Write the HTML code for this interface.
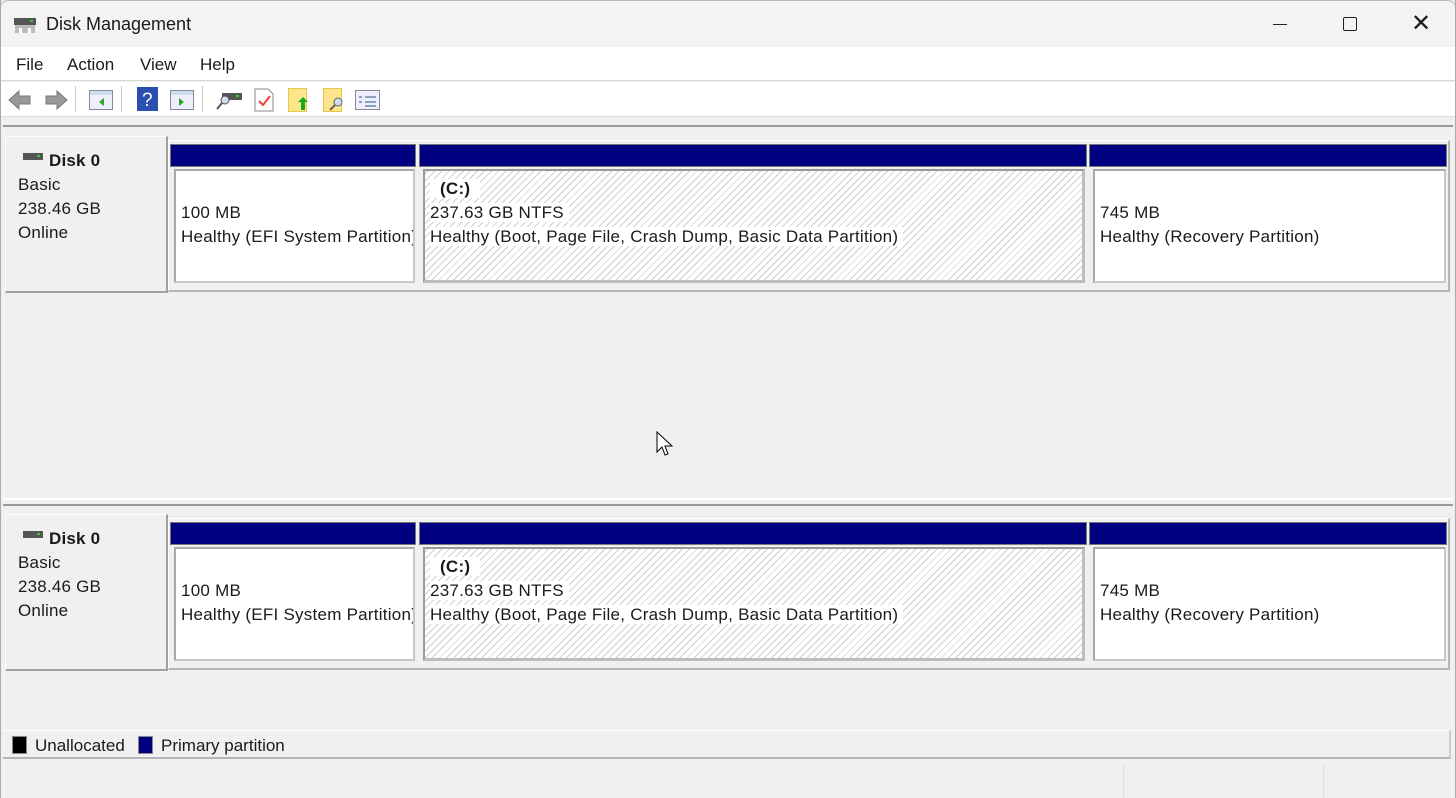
<!DOCTYPE html>
<html><head><style>
*{margin:0;padding:0;box-sizing:border-box}
body{width:1456px;height:798px;background:#f0f0f0;font-family:"Liberation Sans",sans-serif;color:#1a1a1a;position:relative;overflow:hidden;font-size:16px}
.a{position:absolute}
.title{left:0;top:0;width:1456px;height:47px;background:#f3f3f3;border:1px solid #bbb;border-bottom:none;border-radius:8px 8px 0 0}
.menu{left:0;top:47px;width:1456px;height:34px;background:#fff;border-bottom:1px solid #d6d6d6}
.menu span{position:absolute;top:8px;font-size:17px}
.tb{left:0;top:82px;width:1456px;height:35px;background:#fff;border-bottom:1px solid #ddd}
.sep{position:absolute;top:4px;width:1px;height:26px;background:#ccc}
.pane{left:3px;width:1450px;background:#f0f0f0;border-top:2px solid #9a9a9a}
.lbl{background:#f0f0f0;border:1px solid #fff;border-right:2px solid #a0a0a0;border-bottom:2px solid #a0a0a0;font-size:17px;line-height:24px;padding:12px 0 0 12px;letter-spacing:0.2px}
.blue{background:#000080;border:1px solid #777;}
.box{background:#fff;border:2px solid #c8c8c8;border-top:2px solid #a8a8a8;border-left:2px solid #a8a8a8;font-size:17px;line-height:24px;padding:30px 0 0 5px;white-space:nowrap;overflow:hidden;letter-spacing:0.25px}
.hatch{background:repeating-linear-gradient(-45deg,#fff 0 4px,#d0d0d0 4px 5px);border:3px solid #bdbdbd;border-top:2px solid #999;border-left:2px solid #999}
.hatch span{background:#fff}
.outer{background:#f0f0f0;border:1px solid #fff;border-right:2px solid #b5b5b5;border-bottom:2px solid #b5b5b5}
</style></head><body>
<div class="a title">
 <svg class="a" style="left:13px;top:15px" width="22" height="18"><rect x="0" y="2" width="22" height="7" fill="#555"/><rect x="16" y="4" width="3" height="2" fill="#3c3"/><rect x="1" y="9" width="20" height="8" fill="#bbb"/><rect x="5" y="12" width="3" height="5" fill="#fff"/><rect x="14" y="12" width="3" height="5" fill="#fff"/></svg>
 <div class="a" style="left:45px;top:13px;font-size:18px">Disk Management</div>
 <div class="a" style="left:1272px;top:23px;width:14px;height:1px;background:#222"></div>
 <div class="a" style="left:1342px;top:16px;width:14px;height:14px;border:1.5px solid #222;border-radius:2px"></div>
 <div class="a" style="left:1410px;top:8px;font-size:24px;font-weight:300">✕</div>
</div>
<div class="a menu"><span style="left:16px">File</span><span style="left:67px">Action</span><span style="left:140px">View</span><span style="left:200px">Help</span></div>
<div class="a tb">
 <svg class="a" style="left:8px;top:7px" width="60" height="22"><path d="M1 11 L11 2 V7 H22 V15 H11 V20Z" fill="#999" stroke="#777"/><path d="M59 11 L49 2 V7 H38 V15 H49 V20Z" fill="#999" stroke="#777"/></svg>
 <div class="sep" style="left:75px"></div>
 <svg class="a" style="left:89px;top:8px" width="24" height="20"><rect x=".5" y=".5" width="23" height="19" fill="#eef" stroke="#889"/><rect x="1" y="1" width="22" height="4" fill="#cde"/><path d="M15 8 L10 12 L15 16Z" fill="#2a2"/></svg>
 <div class="sep" style="left:121px"></div>
 <svg class="a" style="left:137px;top:5px" width="21" height="24"><rect width="21" height="24" fill="#2b4fb0"/><text x="5" y="19" fill="#fff" font-size="19" font-family="Liberation Sans">?</text></svg>
 <svg class="a" style="left:170px;top:8px" width="24" height="20"><rect x=".5" y=".5" width="23" height="19" fill="#eef" stroke="#889"/><rect x="1" y="1" width="22" height="4" fill="#cde"/><path d="M9 8 L14 12 L9 16Z" fill="#2a2"/></svg>
 <div class="sep" style="left:202px"></div>
 <svg class="a" style="left:216px;top:8px" width="26" height="20"><rect x="6" y="3" width="20" height="7" fill="#555"/><rect x="20" y="5" width="3" height="2" fill="#3c3"/><circle cx="9" cy="10" r="4" fill="#cde" stroke="#555"/><path d="M6 13 L1 19" stroke="#555" stroke-width="2"/></svg>
 <svg class="a" style="left:254px;top:6px" width="20" height="24"><path d="M1 1H14L19 6V23H1Z" fill="#fff" stroke="#888"/><path d="M5 13 L9 17 L16 8" stroke="#e43" stroke-width="2" fill="none"/></svg>
 <svg class="a" style="left:288px;top:6px" width="22" height="24"><rect x=".5" y=".5" width="18" height="23" fill="#fce58a" stroke="#e8c84a"/><path d="M15 9 L20 14 H17 V22 H13 V14 H10Z" fill="#1a2"/></svg>
 <svg class="a" style="left:323px;top:6px" width="22" height="24"><rect x=".5" y=".5" width="18" height="23" fill="#fce58a" stroke="#e8c84a"/><circle cx="15" cy="14" r="4" fill="#cde" stroke="#666"/><path d="M12 17 L7 22" stroke="#666" stroke-width="2"/></svg>
 <svg class="a" style="left:355px;top:8px" width="25" height="20"><rect x=".5" y=".5" width="24" height="19" fill="#eef" stroke="#889"/><path d="M4 7h3M4 12h3M10 7h11M10 12h11M10 16h11" stroke="#68a" stroke-width="1.5"/></svg>
</div>

<!-- top pane -->
<div class="a pane" style="top:125px;height:375px;border-bottom:2px solid #fff"></div>
<div class="a lbl" style="left:5px;top:136px;width:163px;height:157px"><div style="position:relative"><svg class="a" style="left:5px;top:4px" width="20" height="8"><rect width="20" height="7" fill="#555"/><rect x="14" y="2" width="3" height="2" fill="#3c3"/></svg><b style="margin-left:31px">Disk 0</b></div>Basic<br>238.46 GB<br>Online</div>
<div class="a outer" style="left:168px;top:140px;width:1282px;height:152px"></div>
<div class="a blue" style="left:170px;top:144px;width:246px;height:23px"></div>
<div class="a blue" style="left:419px;top:144px;width:668px;height:23px"></div>
<div class="a blue" style="left:1089px;top:144px;width:358px;height:23px"></div>
<div class="a box" style="left:174px;top:169px;width:241px;height:114px">100 MB<br>Healthy (EFI System Partition)</div>
<div class="a box hatch" style="left:423px;top:169px;width:662px;height:114px;padding:6px 0 0 5px"><span style="font-weight:bold;padding:0 10px">(C:)</span><br><span>237.63 GB NTFS&nbsp;</span><br><span>Healthy (Boot, Page File, Crash Dump, Basic Data Partition)&nbsp;</span></div>
<div class="a box" style="left:1093px;top:169px;width:353px;height:114px">745 MB<br>Healthy (Recovery Partition)</div>

<!-- bottom pane -->
<div class="a pane" style="top:504px;height:226px"></div>
<div class="a lbl" style="left:5px;top:514px;width:163px;height:157px"><div style="position:relative"><svg class="a" style="left:5px;top:4px" width="20" height="8"><rect width="20" height="7" fill="#555"/><rect x="14" y="2" width="3" height="2" fill="#3c3"/></svg><b style="margin-left:31px">Disk 0</b></div>Basic<br>238.46 GB<br>Online</div>
<div class="a outer" style="left:168px;top:518px;width:1282px;height:152px"></div>
<div class="a blue" style="left:170px;top:522px;width:246px;height:23px"></div>
<div class="a blue" style="left:419px;top:522px;width:668px;height:23px"></div>
<div class="a blue" style="left:1089px;top:522px;width:358px;height:23px"></div>
<div class="a box" style="left:174px;top:547px;width:241px;height:114px">100 MB<br>Healthy (EFI System Partition)</div>
<div class="a box hatch" style="left:423px;top:547px;width:662px;height:114px;padding:6px 0 0 5px"><span style="font-weight:bold;padding:0 10px">(C:)</span><br><span>237.63 GB NTFS&nbsp;</span><br><span>Healthy (Boot, Page File, Crash Dump, Basic Data Partition)&nbsp;</span></div>
<div class="a box" style="left:1093px;top:547px;width:353px;height:114px">745 MB<br>Healthy (Recovery Partition)</div>

<!-- legend -->
<div class="a" style="left:3px;top:730px;width:1448px;height:29px;border-top:1px solid #fff;border-bottom:2px solid #b5b5b5;border-right:2px solid #ccc"></div>
<div class="a" style="left:12px;top:736px;width:15px;height:18px;background:#000;border:1px solid #888"></div>
<div class="a" style="left:35px;top:736px;font-size:17px">Unallocated</div>
<div class="a" style="left:138px;top:736px;width:15px;height:18px;background:#000080;border:1px solid #888"></div>
<div class="a" style="left:161px;top:736px;font-size:17px">Primary partition</div>
<!-- status -->
<div class="a" style="left:1123px;top:765px;width:1px;height:33px;background:#ddd"></div>
<div class="a" style="left:1323px;top:765px;width:1px;height:33px;background:#ddd"></div>
<div class="a" style="left:0;top:0;width:1px;height:798px;background:#aaa"></div>
<div class="a" style="left:1455px;top:0;width:1px;height:798px;background:#aaa"></div>
<!-- cursor -->
<svg class="a" style="left:656px;top:431px" width="20" height="28"><path d="M1 1 V21 L6 16 L9 24 L12 23 L9 15 H16Z" fill="#fff" stroke="#000"/></svg>
</body></html>
